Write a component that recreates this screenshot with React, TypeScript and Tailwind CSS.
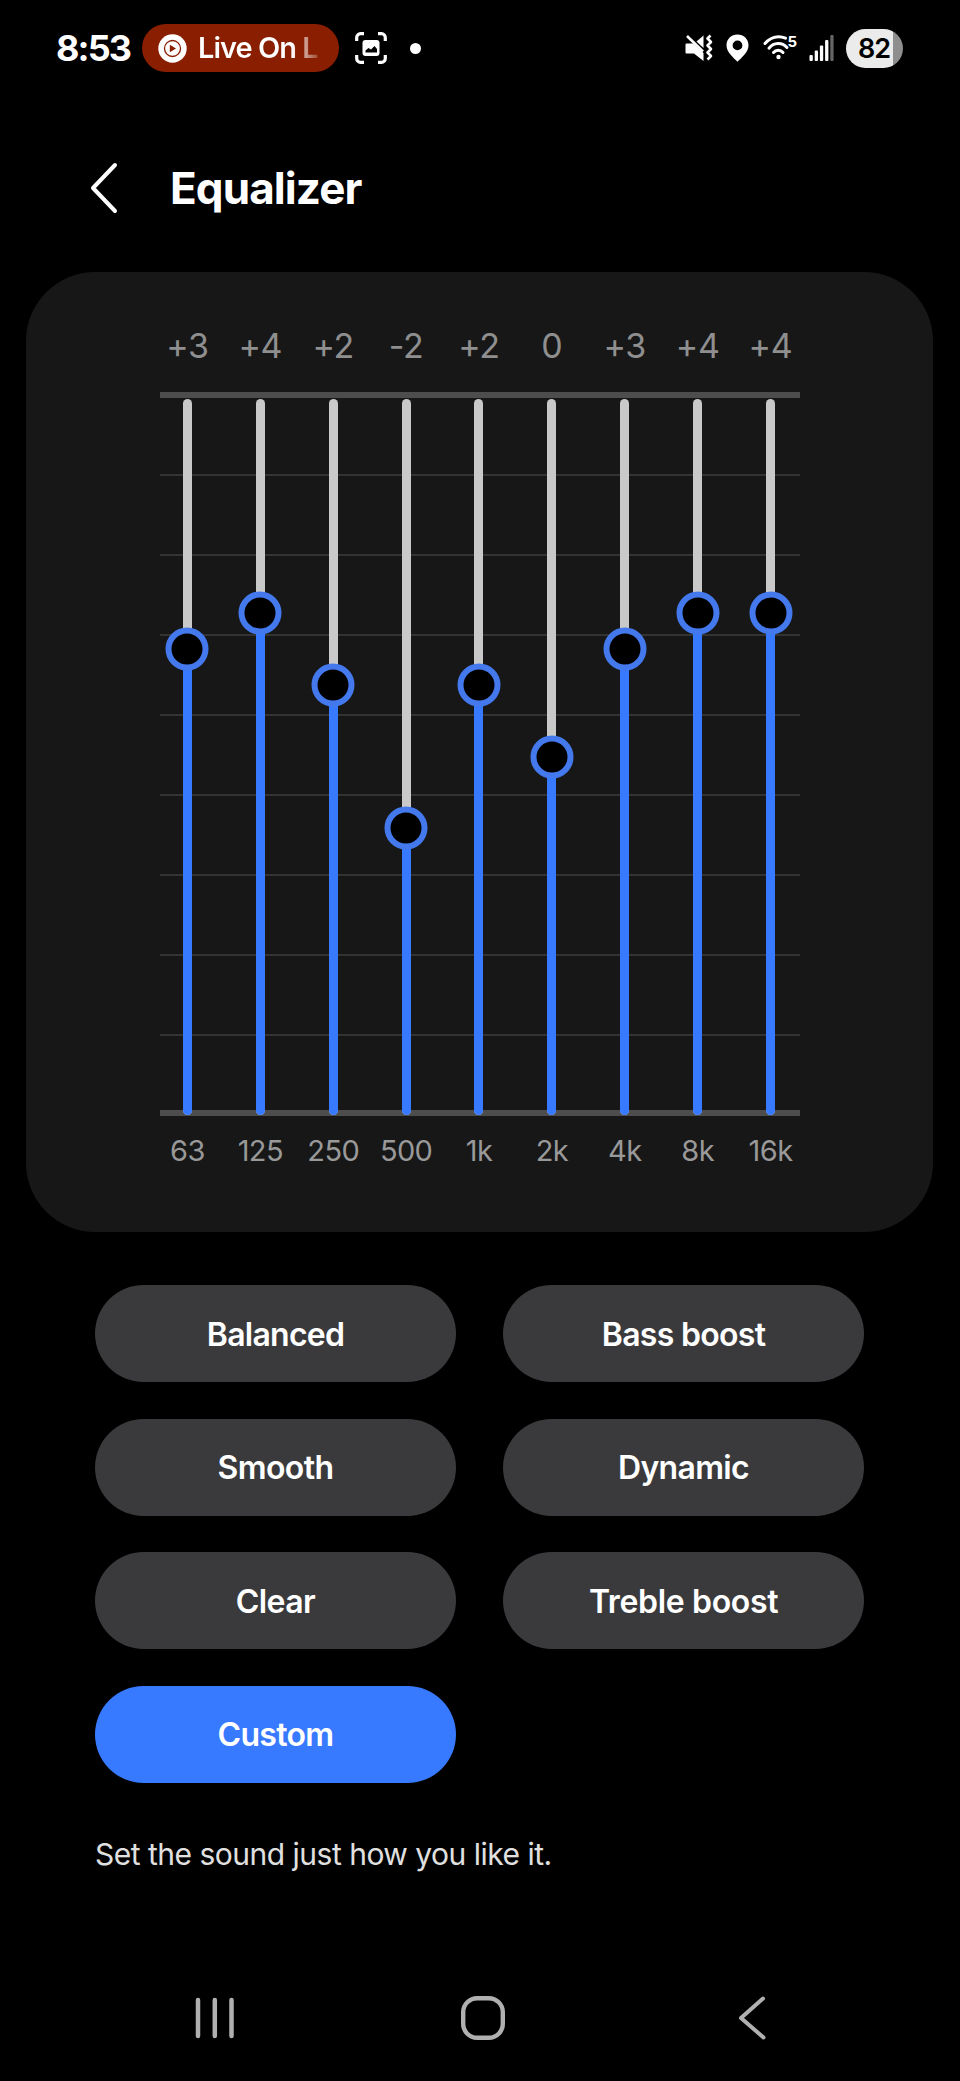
import React from "react";

const bands = [
  { label: "63", value: 3 },
  { label: "125", value: 4 },
  { label: "250", value: 2 },
  { label: "500", value: -2 },
  { label: "1k", value: 2 },
  { label: "2k", value: 0 },
  { label: "4k", value: 3 },
  { label: "8k", value: 4 },
  { label: "16k", value: 4 },
];

const presets = [
  { name: "Balanced", spacing: "tracking-[-0.75px]" },
  { name: "Bass boost", spacing: "tracking-[-0.7px]" },
  { name: "Smooth", spacing: "tracking-[-0.6px]" },
  { name: "Dynamic", spacing: "tracking-[-0.7px]" },
  { name: "Clear", spacing: "tracking-[-0.6px]" },
  { name: "Treble boost", spacing: "tracking-[-0.35px]" },
  { name: "Custom", spacing: "tracking-[-0.7px]" },
];

function StatusBar() {
  return (
    <div className="flex h-24 shrink-0 items-center pl-[56px] pr-[57px]">
      <span className="w-[86px] whitespace-nowrap text-[36px] font-bold leading-none tracking-[-1.9px]">8:53</span>
      <div className="flex h-12 w-[197px] items-center rounded-full bg-[#8a1e00] pl-4">
        <svg width="29" height="29" viewBox="0 0 29 29" fill="none">
          <circle cx="14.5" cy="14.5" r="14.2" fill="#fff" />
          <circle cx="14.5" cy="14.5" r="8" stroke="#8a1e00" strokeWidth="1.3" />
          <path d="M11.8 10.8L18 14.5L11.8 18.2Z" fill="#8a1e00" />
        </svg>
        <span className="ml-[11px] w-[120px] overflow-hidden whitespace-nowrap bg-linear-to-r from-white from-78% to-white/20 to-100% bg-clip-text text-[29px] font-semibold leading-[40px] tracking-[-1px] text-transparent">
          Live On L
        </span>
      </div>
      <svg className="ml-[16px]" width="32" height="32" viewBox="0 0 32 32" fill="none">
        <path
          d="M1.7 9V5.5A3.8 3.8 0 0 1 5.5 1.7H9M23 1.7H26.5A3.8 3.8 0 0 1 30.3 5.5V9M30.3 23V26.5A3.8 3.8 0 0 1 26.5 30.3H23M9 30.3H5.5A3.8 3.8 0 0 1 1.7 26.5V23"
          stroke="#fff"
          strokeWidth="3.2"
        />
        <rect x="7.5" y="8" width="17" height="16" rx="3" fill="#fff" />
        <path d="M10.5 20.5V18.5L13.5 16L16 17.5L19.5 14L22 17V20.5Z" fill="#000" />
      </svg>
      <span className="ml-[23px] size-[11px] rounded-full bg-white" />

      <div className="ml-auto flex items-center">
        {/* muted, vibrate */}
        <svg width="28" height="28" viewBox="0 0 28 28" fill="none">
          <path d="M1.5 9.5H8L18.5 19V27L9 19.5H1.5Q0.5 19.5 0.5 18.5V10.5Q0.5 9.5 1.5 9.5Z" fill="#fff" />
          <path d="M11.5 7.5L18.5 1.5V14Z" fill="#fff" />
          <path d="M2 2L18 17.5" stroke="#fff" strokeWidth="2.6" />
          <path
            d="M25.5 1.5L22.5 4.5L26 8L22.5 11.5L26 15L22.5 18.5L26 22L22.5 25.5"
            stroke="#fff"
            strokeWidth="2.6"
            strokeLinejoin="round"
          />
        </svg>
        {/* location */}
        <svg className="ml-[13px]" width="23" height="28" viewBox="0 0 23 28">
          <path
            d="M11.5 0.5C5.2 0.5 0.5 5.2 0.5 11.2C0.5 18.5 8 24 11.5 27.7C15 24 22.5 18.5 22.5 11.2C22.5 5.2 17.8 0.5 11.5 0.5ZM11.5 6.5A4.9 4.9 0 1 1 11.5 16.3A4.9 4.9 0 0 1 11.5 6.5Z"
            fill="#fff"
            fillRule="evenodd"
          />
        </svg>
        {/* wifi */}
        <div className="relative ml-[14px] h-7 w-[34px]">
          <svg width="34" height="28" viewBox="0 0 34 28" fill="none">
            <path d="M2 9.5C8 2.5 16 1.5 22.5 4.2" stroke="#fff" strokeWidth="3" strokeLinecap="round" />
            <path d="M6 14.2C11 8.2 19 8.2 24 13.5" stroke="#fff" strokeWidth="3" strokeLinecap="round" />
            <path d="M10.5 18.5C13 15.5 17.5 15.5 20 18.5" stroke="#fff" strokeWidth="3" strokeLinecap="round" />
            <circle cx="15.5" cy="23" r="2.2" fill="#fff" />
          </svg>
          <span className="absolute right-0 top-0 text-[15px] font-bold leading-none">5</span>
        </div>
        {/* signal */}
        <svg className="ml-[12px]" width="26" height="28" viewBox="0 0 26 28">
          <rect x="0.5" y="21" width="3.3" height="6" rx="1" fill="#fff" />
          <rect x="5.7" y="16.5" width="3.3" height="10.5" rx="1" fill="#fff" />
          <rect x="10.9" y="11.5" width="3.3" height="15.5" rx="1" fill="#fff" />
          <rect x="16.1" y="6" width="3.3" height="21" rx="1" fill="#fff" />
          <rect x="21.3" y="1" width="3.3" height="26" rx="1" fill="#666" />
        </svg>
        <div className="ml-[11px] flex h-[39px] w-[57px] items-center overflow-hidden rounded-full bg-linear-to-r from-[#ebebeb] from-82% to-[#8e8e8e] to-82% pl-[12px] text-[27px] font-semibold leading-none tracking-[-1px] text-black">
          82
        </div>
      </div>
    </div>
  );
}

function Band({ value }: { value: number }) {
  const pos = ((10 - value) / 20) * 100;
  return (
    <div className="relative h-[716px] w-[9px] rounded-full bg-[#c9c9c9]">
      <div className="absolute inset-x-0 bottom-0 rounded-b-full bg-[#387aff]" style={{ top: `${pos}%` }} />
      <div
        className="absolute left-1/2 size-[43px] -translate-x-1/2 -translate-y-1/2 rounded-full border-[6px] border-[#4479ee] bg-black"
        style={{ top: `${pos}%` }}
      />
    </div>
  );
}

function Equalizer() {
  return (
    <div className="ml-[26px] h-[960px] w-[907px] shrink-0 rounded-[69px] bg-[#171717] pl-[134px] pt-[54px]">
      <div className="w-[640px]">
        <div className="-ml-[9px] grid w-[656px] grid-cols-9 text-center text-[34px] leading-[40px] tracking-[-0.3px] text-[#8f8f8f]">
          {bands.map((b) => (
            <span key={b.label}>{b.value > 0 ? `+${b.value}` : b.value}</span>
          ))}
        </div>
        <div className="relative mt-[26px]">
          <div className="h-[6px] bg-[#4d4d4d]" />
          <div className="mb-[74px] mt-[76px] flex flex-col gap-[78px]">
            {[1, 2, 3, 4, 5, 6, 7, 8].map((n) => (
              <div key={n} className="h-[2px] bg-[#333]" />
            ))}
          </div>
          <div className="h-[6px] bg-[#4d4d4d]" />
          <div className="absolute -left-[9px] top-[6.5px] grid w-[656px] grid-cols-9 justify-items-center">
            {bands.map((b) => (
              <Band key={b.label} value={b.value} />
            ))}
          </div>
        </div>
        <div className="-ml-[9px] mt-[15px] grid w-[656px] grid-cols-9 text-center text-[29px] leading-[40px] tracking-[-0.6px] text-[#999]">
          {bands.map((b) => (
            <span key={b.label}>{b.label}</span>
          ))}
        </div>
      </div>
    </div>
  );
}

export default function App() {
  return (
    <div className="flex h-[2081px] w-[960px] flex-col overflow-hidden bg-black font-['Inter',sans-serif] text-white">
      <StatusBar />

      <div className="flex h-[176px] shrink-0 items-center pb-[2px] pl-[90px] pt-[9px]">
        <svg width="28" height="52" viewBox="0 0 28 52" fill="none">
          <path d="M25 3L3 26L25 49" stroke="#fff" strokeWidth="4" strokeLinecap="round" strokeLinejoin="round" />
        </svg>
        <h1 className="ml-[52px] text-[44px] font-bold leading-none tracking-[-0.9px]">Equalizer</h1>
      </div>

      <Equalizer />

      <div className="ml-[95px] mt-[53px] grid w-[769px] grid-cols-2 gap-x-[47px] gap-y-[36.5px]">
        {presets.map((p) => (
          <button
            key={p.name}
            className={`h-[97px] rounded-full pt-[2px] text-[32px] font-semibold ${p.spacing} ${
              p.name === "Custom" ? "bg-[#387aff]" : "bg-[#3a3a3c]"
            }`}
          >
            {p.name}
          </button>
        ))}
      </div>

      <p className="ml-[95px] mt-[51px] text-[30px] leading-[40px] tracking-[-0.5px] text-[#e0e0e0]">
        Set the sound just how you like it.
      </p>

      <div className="mt-auto flex h-[126px] items-center pl-[194px]">
        <svg width="42" height="44" viewBox="0 0 42 44" fill="none">
          <path d="M4 4V40M20.8 4V40M37.5 4V40" stroke="#b0b0b0" strokeWidth="4.5" strokeLinecap="round" />
        </svg>
        <svg className="ml-[225px]" width="44" height="44" viewBox="0 0 44 44" fill="none">
          <rect x="2.2" y="2.2" width="39.6" height="39.6" rx="14" stroke="#b0b0b0" strokeWidth="4.4" />
        </svg>
        <svg className="ml-[233px]" width="28" height="44" viewBox="0 0 28 44" fill="none">
          <path d="M25 2.5L3 22L25.5 41.5" stroke="#b0b0b0" strokeWidth="4" strokeLinecap="round" strokeLinejoin="round" />
        </svg>
      </div>
    </div>
  );
}
